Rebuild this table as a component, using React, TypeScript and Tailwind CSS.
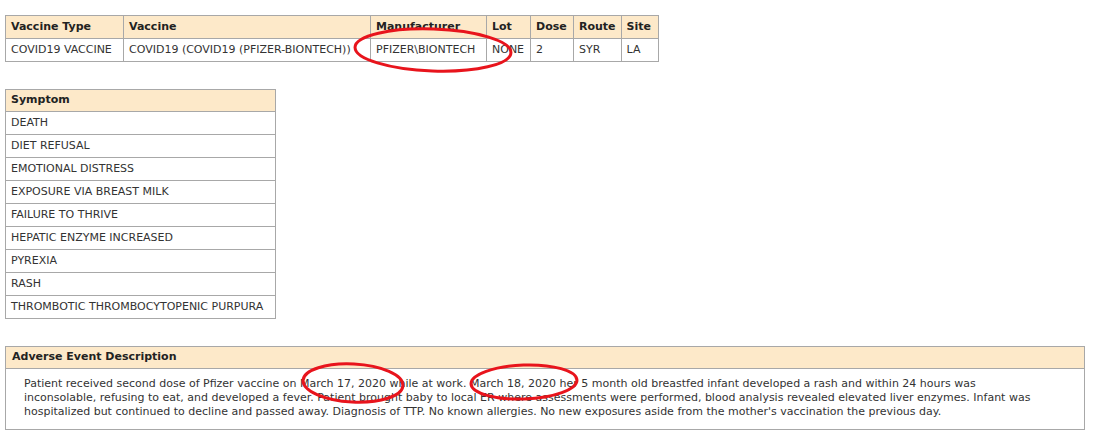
import React from 'react';

const vaccineCols = ['Vaccine Type', 'Vaccine', 'Manufacturer', 'Lot', 'Dose', 'Route', 'Site'];
const vaccineRow = ['COVID19 VACCINE', 'COVID19 (COVID19 (PFIZER-BIONTECH))', 'PFIZER\\BIONTECH', 'NONE', '2', 'SYR', 'LA'];
const colWidths = ['w-[118px]', 'w-[247px]', 'w-[116px]', 'w-[44px]', 'w-[43px]', 'w-[47px]', 'w-[37px]'];

const symptoms = [
  'DEATH',
  'DIET REFUSAL',
  'EMOTIONAL DISTRESS',
  'EXPOSURE VIA BREAST MILK',
  'FAILURE TO THRIVE',
  'HEPATIC ENZYME INCREASED',
  'PYREXIA',
  'RASH',
  'THROMBOTIC THROMBOCYTOPENIC PURPURA',
];

export default function App() {
  return (
    <div className="relative w-[1100px] h-[448px] bg-white text-[11px] text-[#333] font-['DejaVu_Sans','Verdana',sans-serif] overflow-hidden">
      <div className="pt-[15px] pl-[5px]">
        {/* vaccine table */}
        <table className="border-collapse border border-[#a8a8a8] table-fixed">
          <thead>
            <tr className="bg-[#fde9c9] h-[23px]">
              {vaccineCols.map((c, i) => (
                <th key={c} className={`${colWidths[i]} border border-[#a8a8a8] px-[5px] text-left font-bold text-[#222] whitespace-nowrap`}>
                  {c}
                </th>
              ))}
            </tr>
          </thead>
          <tbody>
            <tr className="h-[23px]">
              {vaccineRow.map((v, i) => (
                <td key={i} className="border border-[#a8a8a8] px-[5px] whitespace-nowrap">
                  {v}
                </td>
              ))}
            </tr>
          </tbody>
        </table>

        {/* symptoms */}
        <table className="mt-[27px] w-[271px] border-collapse border border-[#a8a8a8]">
          <thead>
            <tr className="bg-[#fde9c9] h-[22px]">
              <th className="border border-[#a8a8a8] px-[5px] text-left font-bold text-[#222]">Symptom</th>
            </tr>
          </thead>
          <tbody>
            {symptoms.map((s) => (
              <tr key={s} className="h-[23px]">
                <td className="border border-[#a8a8a8] px-[5px] whitespace-nowrap">{s}</td>
              </tr>
            ))}
          </tbody>
        </table>

        {/* adverse event description */}
        <div className="mt-[27px] w-[1080px] border border-[#a8a8a8]">
          <div className="h-[22px] bg-[#fde9c9] border-b border-[#a8a8a8] px-[6px] flex items-center font-bold text-[#222]">
            Adverse Event Description
          </div>
          <p className="pl-[18px] pt-[8px] pb-[10px] leading-[14px]">
            Patient received second dose of Pfizer vaccine on March 17, 2020 while at work. March 18, 2020 her 5 month old breastfed infant developed a rash and within 24 hours was
            <br />
            inconsolable, refusing to eat, and developed a fever. Patient brought baby to local ER where assessments were performed, blood analysis revealed elevated liver enzymes. Infant was
            <br />
            hospitalized but continued to decline and passed away. Diagnosis of TTP. No known allergies. No new exposures aside from the mother's vaccination the previous day.
          </p>
        </div>
      </div>

      {/* red annotation circles */}
      <svg className="absolute inset-0 pointer-events-none" width="1100" height="448">
        <g fill="none" stroke="#e8141c" strokeWidth="3">
          <ellipse cx="433" cy="50" rx="78" ry="21" transform="rotate(2 433 50)" />
          <ellipse cx="353" cy="383" rx="50" ry="19" transform="rotate(3 353 383)" />
          <ellipse cx="524" cy="382" rx="53" ry="17" transform="rotate(-2 524 382)" />
        </g>
      </svg>
    </div>
  );
}
